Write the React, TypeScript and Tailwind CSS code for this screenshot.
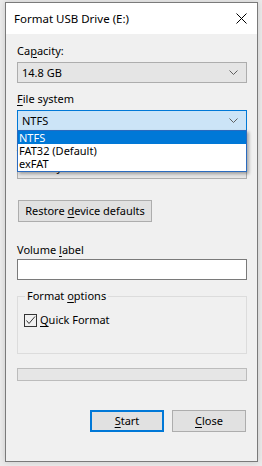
import React from "react";

const Chevron = () => (
  <svg width="9" height="5" viewBox="0 0 9 5" className="shrink-0">
    <polyline points="0.5,0.5 4.5,4.5 8.5,0.5" fill="none" stroke="#606060" strokeWidth="1" />
  </svg>
);

const U: React.FC<{ children: React.ReactNode }> = ({ children }) => (
  <span className="underline underline-offset-[2px] decoration-1">{children}</span>
);

const Combo: React.FC<{ value: string; active?: boolean; raised?: boolean }> = ({ value, active, raised }) => (
  <div
    className={`h-[21px] w-[230px] flex items-center justify-between pl-[4px] pr-[8px] border ${
      active ? "bg-[#cce4f7] border-[#0078d7]" : "bg-[#e5e5e5] border-[#adadad]"
    }`}
  >
    <span className={raised ? "leading-[16px] -mt-[3px]" : "leading-[16px]"}>{value}</span>
    <Chevron />
  </div>
);

export default function App() {
  return (
    <div className="w-[262px] h-[466px] bg-[#ebebeb] pt-[2px] pl-[5px] font-['Noto_Sans',sans-serif] text-[11px] text-black whitespace-nowrap">
      <div className="w-[253px] h-[460px] border border-[#7a7a7a] flex flex-col bg-[#f0f0f0] shadow-[0_0_6px_rgba(0,0,0,0.15)]">
        {/* title bar */}
        <div className="h-[31px] bg-white flex items-center justify-between pl-[8px] pr-[10px]">
          <span className="leading-[16px] text-[11.5px]">Format USB Drive (E:)</span>
          <svg width="11" height="11" viewBox="0 0 11 11">
            <path d="M0.5 0.5 L10.5 10.5 M10.5 0.5 L0.5 10.5" stroke="#000" strokeWidth="1" />
          </svg>
        </div>

        <div className="flex flex-col pl-[11px] pr-[10px] pt-[9px]">
          <div className="h-[16px] leading-[16px]">
            Ca<U>p</U>acity:
          </div>
          <div className="mt-[3px]">
            <Combo value="14.8 GB" />
          </div>

          <div className="h-[16px] leading-[16px] mt-[8px]">
            <U>F</U>ile system
          </div>
          <div className="mt-[3px] relative z-10">
            <Combo value="NTFS" active />
            {/* open drop-down list */}
            <div className="absolute top-[20px] left-0 w-[230px] h-[42px] bg-white border border-[#2a6bbf] shadow-[2px_2px_3px_rgba(0,0,0,0.3)] flex flex-col">
              <div className="h-[13px] leading-[13px] bg-[#0078d7] text-white pl-[1px]">NTFS</div>
              <div className="h-[13px] leading-[13px] pl-[1px]">FAT32 (Default)</div>
              <div className="h-[13px] leading-[13px] pl-[1px]">exFAT</div>
            </div>
          </div>

          <div className="h-[16px] leading-[16px] mt-[8px]">
            <U>A</U>llocation unit size
          </div>
          <div className="mt-[3px]">
            <Combo value="4096 bytes" raised />
          </div>

          <button className="mt-[21px] ml-[1px] w-[134px] h-[22px] bg-[#e1e1e1] border border-[#adadad] text-center leading-[16px]">
            Restore <U>d</U>evice defaults
          </button>

          <div className="h-[16px] leading-[16px] mt-[20px]">
            Volume <U>l</U>abel
          </div>
          <div className="mt-[1px] h-[21px] w-[230px] bg-white border border-[#7a7a7a]" />

          <fieldset className="mt-[8px] w-[230px] h-[66px] border border-[#dcdcdc] pl-[6px]">
            <legend className="ml-[1px] px-[2px] h-[16px] leading-[16px]">
              Format <U>o</U>ptions
            </legend>
            <div className="mt-[8px] flex items-center gap-[3px] h-[16px]">
              <div className="w-[13px] h-[13px] border border-[#333333] bg-[#f0f0f0] flex items-center justify-center">
                <svg width="11" height="11" viewBox="0 0 11 11">
                  <polyline points="1.5,5.5 4,8.5 10,1.5" fill="none" stroke="#333333" strokeWidth="1" />
                </svg>
              </div>
              <span className="leading-[16px]">
                <U>Q</U>uick Format
              </span>
            </div>
          </fieldset>

          <div className="mt-[14px] h-[13px] w-[230px] bg-[#e6e6e6] border border-[#bcbcbc]" />

          <div className="mt-[29px] flex justify-end gap-[8px] w-[230px] pr-[1px]">
            <button className="w-[74px] h-[22px] bg-[#e1e1e1] border-2 border-[#0078d7] leading-[16px]">
              <U>S</U>tart
            </button>
            <button className="w-[74px] h-[22px] bg-[#e1e1e1] border border-[#adadad] leading-[16px]">
              <U>C</U>lose
            </button>
          </div>
        </div>
      </div>
    </div>
  );
}
